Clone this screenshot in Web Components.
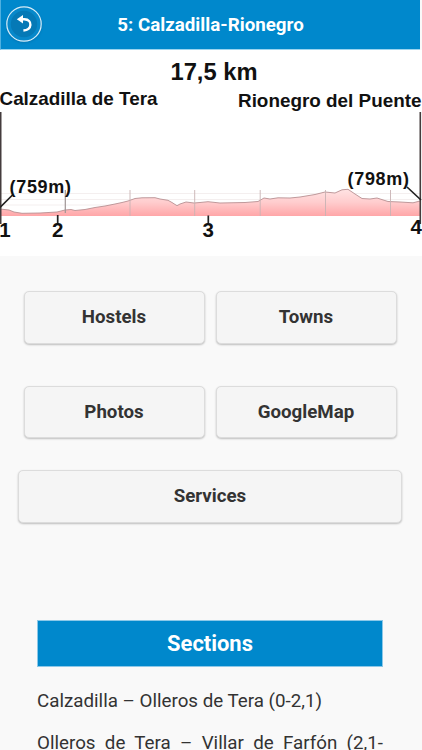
<!DOCTYPE html>
<html lang="en">
<head>
<meta charset="utf-8">
<title>5: Calzadilla-Rionegro</title>
<style>
html,body{margin:0;height:750px;overflow:hidden;background:#f9f9f9}
body{font-family:Roboto,"Liberation Sans",sans-serif;color:#333}
</style>
</head>
<body>
<stage-page></stage-page>
<script>
function define(name, html){
  customElements.define(name, class extends HTMLElement{
    constructor(){
      super();
      const t=document.createElement('template');
      t.innerHTML=html;
      this.attachShadow({mode:'open'}).append(t.content.cloneNode(true));
    }
  });
}

define('back-button', `
<style>:host{display:block;width:36px;height:36px}svg{display:block;filter:drop-shadow(0 1px 1px #0066a080)}</style>
<svg width="36" height="36" viewBox="0 0 36 36" role="img" aria-label="Back">
<circle cx="18" cy="18" r="17.2" fill="#0788ca" stroke="#d5ecf8" stroke-width="1.2"/>
<circle cx="18" cy="18" r="13.2" fill="#0579b6"/>
<path d="M10.8 13.2 17 9 17 17.4Z" fill="#fff"/>
<path d="M15.5 13.2H18.4C22.6 13.4 24.7 15.8 24.4 19C24.1 22.4 21.6 24.2 17.4 24.5" fill="none" stroke="#fff" stroke-width="2.4"/>
</svg>`);

define('top-bar', `
<style>
:host{display:grid;grid-template-columns:48px 1fr 48px;align-items:center;width:420px;height:50px;box-sizing:border-box;background:#08c;border-left:1px solid #4eb0e0;border-bottom:1px solid #9bd4ef;box-shadow:0 1px #d9f1fc;color:#fff}
back-button{margin:-2px 0 0 5px}
h1{margin:0;font-size:18.75px;line-height:24px;font-weight:700;text-align:center;white-space:nowrap}
</style>
<back-button></back-button><h1><slot></slot></h1>`);

define('elevation-profile', `
<style>
:host{display:block;height:206px;background:#fff}
svg{display:block;font-family:"Liberation Sans",Arial,sans-serif;font-weight:700;fill:#111}
</style>
<svg width="422" height="206" viewBox="0 50 422 206">
<defs><linearGradient id="g" gradientUnits="userSpaceOnUse" x1="0" y1="189" x2="0" y2="216"><stop offset="0" stop-color="#ffe4e4"/><stop offset=".5" stop-color="#ffcccd"/><stop offset="1" stop-color="#ffa6a8"/></linearGradient></defs>
<path d="M0 193.5H420M0 199.5H420M0 205H420" stroke="#f4efef" fill="none"/>
<path d="M0 209 9 210 14 212 22 213.3 40 213 57 212 65 210 71 209.5 75 210.5 85 209.5 95 207.5 105 206 115 204 122 202.5 128 201 135 198.5 142 197.8 155 197.7 160 199 168 200.3 172 202.5 177 205.7 180 204 186 202 194 203 200 202.5 208 201.7 220 203 245 202.5 258 201.5 264 198 270 199 278 197.8 290 198 300 197 315 194.5 325 192 335 193 342 189.8 348 189.3 355 194 362 198.5 370 199 377 198 388 201.5 400 202 413 202.8 420 201V216H0Z" fill="url(#g)"/>
<path d="M0 209 9 210 14 212 22 213.3 40 213 57 212 65 210 71 209.5 75 210.5 85 209.5 95 207.5 105 206 115 204 122 202.5 128 201 135 198.5 142 197.8 155 197.7 160 199 168 200.3 172 202.5 177 205.7 180 204 186 202 194 203 200 202.5 208 201.7 220 203 245 202.5 258 201.5 264 198 270 199 278 197.8 290 198 300 197 315 194.5 325 192 335 193 342 189.8 348 189.3 355 194 362 198.5 370 199 377 198 388 201.5 400 202 413 202.8 420 201" fill="none" stroke="#b89092" stroke-width=".9"/>
<path d="M130 190V216M194.7 190V216M260.2 190V216M325.5 190V216M390.5 190V216" stroke="#c8b2b3" stroke-width=".9"/>
<path d="M65.3 190V213" stroke="#9f9595" stroke-width="1.2"/>
<path d="M.7 112V224M420.3 112V224" stroke="#443c3d" stroke-width="1.6"/>
<path d="M0 207.5 13 194.5M407 187 421 200M57.7 215V224M208.3 215.5V223" stroke="#222" stroke-width="1.7" fill="none"/>
<text x="170.5" y="79.7" font-size="23.4" textLength="87" lengthAdjust="spacingAndGlyphs">17,5 km</text>
<text x="-.5" y="105.3" font-size="18.4" textLength="158" lengthAdjust="spacingAndGlyphs">Calzadilla de Tera</text>
<text x="238" y="106.9" font-size="18.4" textLength="183.5" lengthAdjust="spacingAndGlyphs">Rionegro del Puente</text>
<text x="9.5" y="192.6" font-size="18" textLength="61.5" lengthAdjust="spacing">(759m)</text>
<text x="347.5" y="185.4" font-size="18" textLength="61.5" lengthAdjust="spacing">(798m)</text>
<text x="-.8" y="237.3" font-size="20.5">1</text>
<text x="52" y="237.3" font-size="20.5">2</text>
<text x="202.5" y="236.5" font-size="20.5">3</text>
<text x="410.5" y="233.5" font-size="20.5">4</text>
</svg>`);

define('nav-button', `
<style>
:host{display:block}
button{display:block;width:100%;height:100%;box-sizing:border-box;margin:0;padding:0 0 1px;border:1px solid #dcdcdc;border-radius:5px;background:#f5f5f5;box-shadow:0 1px 2px #0000003d;color:#333;font:700 18.7px/24px Roboto,"Liberation Sans",sans-serif}
</style>
<button type="button"><slot></slot></button>`);

define('section-list', `
<style>
:host{display:block;margin:97px 39px 0 37px}
h2{height:47px;box-sizing:border-box;margin:0;border:1px solid #8cc8e8;background:#08c;color:#fff;font-size:21.9px;line-height:46px;font-weight:700;text-align:center}
::slotted(p){margin:0 0 18px;font-size:18.75px;line-height:24px}
::slotted(p.full){text-align:justify;text-align-last:justify}
div{padding-top:22px}
</style>
<h2><slot name="title"></slot></h2><div><slot></slot></div>`);

define('stage-page', `
<style>
:host{display:block;width:422px;height:750px;overflow:hidden;background:#f9f9f9}
nav{display:grid;grid-template:53px 42px 52px 32px 53px / 181px 181px;column-gap:11px;justify-content:center;padding:35px 2px 0 0}
.r2{grid-row:3}
.wide{grid-row:5;grid-column:1/-1;margin:0 -5.5px}
</style>
<top-bar>5: Calzadilla-Rionegro</top-bar>
<elevation-profile></elevation-profile>
<nav>
<nav-button>Hostels</nav-button><nav-button>Towns</nav-button>
<nav-button class="r2">Photos</nav-button><nav-button class="r2">GoogleMap</nav-button>
<nav-button class="wide">Services</nav-button>
</nav>
<section-list><span slot="title">Sections</span>
<p>Calzadilla – Olleros de Tera (0-2,1)</p>
<p class="full">Olleros de Tera – Villar de Farfón (2,1-</p>
</section-list>`);
</script>
</body>
</html>
